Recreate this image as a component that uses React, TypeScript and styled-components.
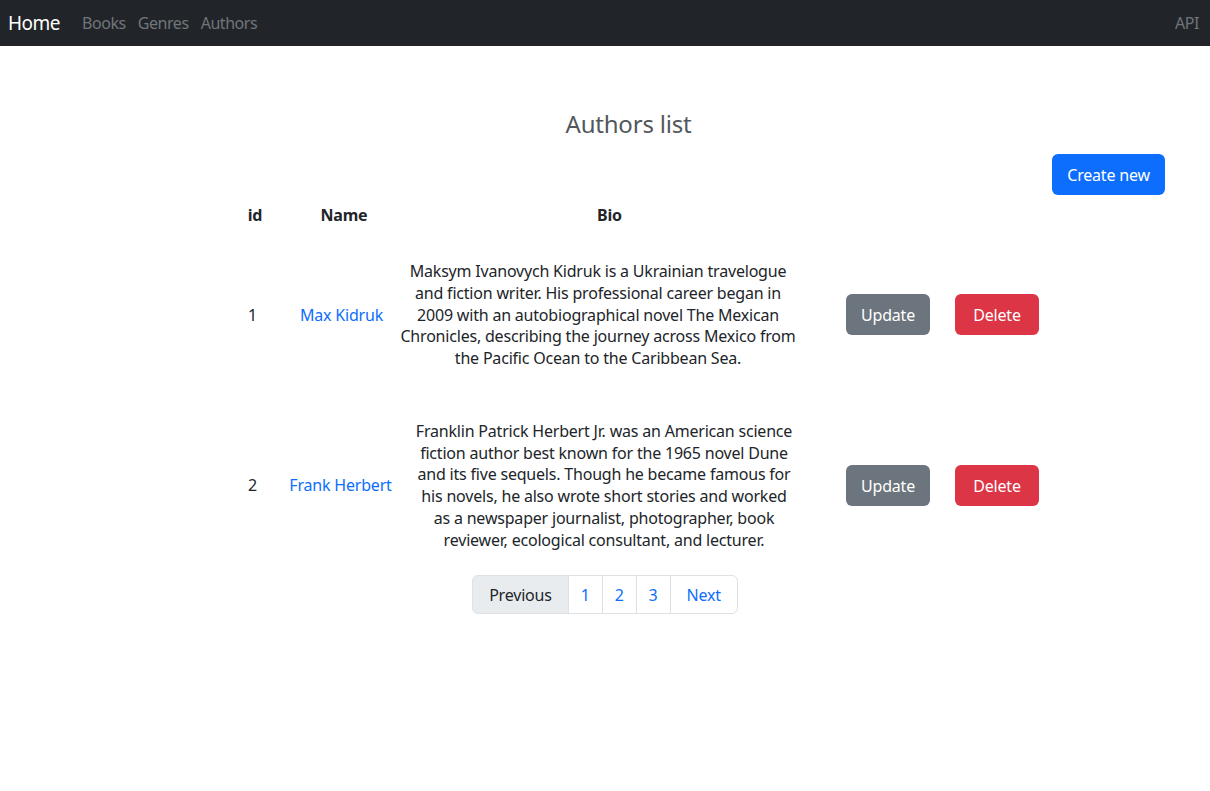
import React from "react";
import styled, { createGlobalStyle } from "styled-components";

const GlobalStyle = createGlobalStyle`
  * { box-sizing: border-box; }
  html, body { margin: 0; padding: 0; background: #fff; }
  body {
    font-family: "Noto Sans", "Open Sans", "Liberation Sans", sans-serif;
    font-size: 16px;
    letter-spacing: -0.2px;
    color: #212529;
  }
`;

const Navbar = styled.nav`
  height: 46px;
  background: #212529;
  display: flex;
  align-items: center;
  padding: 0 11px 0 8px;
`;

const Brand = styled.a`
  font-size: 19px;
  letter-spacing: -0.5px;
  color: #fff;
  text-decoration: none;
  margin-right: 22px;
`;

const NavLinks = styled.div`
  display: flex;
  gap: 12px;
  flex: 1;
`;

const NavLink = styled.a`
  font-size: 16px;
  letter-spacing: -0.45px;
  color: #70757a;
  text-decoration: none;
`;

const Main = styled.main`
  padding: 63px 45px 0 0;
  display: flex;
  flex-direction: column;
`;

const Title = styled.h4`
  margin: 0 0 0 92px;
  font-size: 24px;
  font-weight: 400;
  line-height: 29px;
  color: #52575c;
  text-align: center;
`;

const Toolbar = styled.div`
  display: flex;
  justify-content: flex-end;
  margin-top: 16px;
`;

const Button = styled.button<{ $variant: "primary" | "secondary" | "danger"; $width: number }>`
  width: ${(p) => p.$width}px;
  height: 41px;
  padding: 0;
  border: none;
  border-radius: 6px;
  font-family: inherit;
  font-size: 16px;
  letter-spacing: inherit;
  color: #fff;
  cursor: pointer;
  background: ${(p) =>
    p.$variant === "primary" ? "#0d6efd" : p.$variant === "secondary" ? "#6c757d" : "#dc3545"};
`;

const Table = styled.div`
  display: flex;
  flex-direction: column;
  margin-left: 220px;
`;

const Row = styled.div<{ $cols: string }>`
  display: grid;
  grid-template-columns: ${(p) => p.$cols};
`;

const HeadCell = styled.div`
  height: 40px;
  display: flex;
  align-items: center;
  justify-content: center;
  font-weight: 700;
`;

const Cell = styled.div<{ $indent?: number }>`
  padding: 26px 0 25px ${(p) => p.$indent ?? 0}px;
  display: flex;
  align-items: center;
  justify-content: center;
  text-align: center;
  line-height: 21.75px;
`;

const ActionCell = styled.div<{ $inset: number }>`
  display: flex;
  align-items: center;
  padding-left: ${(p) => p.$inset}px;
`;

const NameLink = styled.a`
  color: #0d6efd;
  text-decoration: none;
  white-space: nowrap;
`;

const Pagination = styled.ul`
  list-style: none;
  display: flex;
  margin: -1px 0 0 45px;
  padding: 0;
  align-self: center;
`;

const PageItem = styled.li<{ $active?: boolean; $wide?: boolean }>`
  height: 39px;
  display: flex;
  align-items: center;
  padding: 0 ${(p) => (p.$wide ? 16 : 12)}px;
  border: 1px solid #dee2e6;
  margin-left: -1px;
  background: ${(p) => (p.$active ? "#e9ecef" : "#fff")};
  color: ${(p) => (p.$active ? "#212529" : "#0d6efd")};
  &:first-child {
    margin-left: 0;
    border-radius: 6px 0 0 6px;
  }
  &:last-child {
    border-radius: 0 6px 6px 0;
  }
`;

const authors = [
  {
    id: 1,
    name: "Max Kidruk",
    bio: "Maksym Ivanovych Kidruk is a Ukrainian travelogue and fiction writer. His professional career began in 2009 with an autobiographical novel The Mexican Chronicles, describing the journey across Mexico from the Pacific Ocean to the Caribbean Sea.",
    cols: "65px 113px 400px 145px 108px",
    indent: 0,
    inset: 48,
  },
  {
    id: 2,
    name: "Frank Herbert",
    bio: "Franklin Patrick Herbert Jr. was an American science fiction author best known for the 1965 novel Dune and its five sequels. Though he became famous for his novels, he also wrote short stories and worked as a newspaper journalist, photographer, book reviewer, ecological consultant, and lecturer.",
    cols: "65px 111px 398px 149px 108px",
    indent: 18,
    inset: 52,
  },
];

export default function App() {
  return (
    <>
      <GlobalStyle />
      <Navbar>
        <Brand href="#">Home</Brand>
        <NavLinks>
          <NavLink href="#">Books</NavLink>
          <NavLink href="#">Genres</NavLink>
          <NavLink href="#">Authors</NavLink>
        </NavLinks>
        <NavLink href="#">API</NavLink>
      </Navbar>
      <Main>
        <Title>Authors list</Title>
        <Toolbar>
          <Button $variant="primary" $width={113}>Create new</Button>
        </Toolbar>
        <Table>
          <Row $cols="70px 108px 423px">
            <HeadCell>id</HeadCell>
            <HeadCell>Name</HeadCell>
            <HeadCell>Bio</HeadCell>
          </Row>
          {authors.map((a) => (
            <Row key={a.id} $cols={a.cols}>
              <Cell>{a.id}</Cell>
              <Cell>
                <NameLink href="#">{a.name}</NameLink>
              </Cell>
              <Cell $indent={a.indent}>{a.bio}</Cell>
              <ActionCell $inset={a.inset}>
                <Button $variant="secondary" $width={84}>Update</Button>
              </ActionCell>
              <ActionCell $inset={12}>
                <Button $variant="danger" $width={84}>Delete</Button>
              </ActionCell>
            </Row>
          ))}
        </Table>
        <Pagination>
          <PageItem $active $wide>Previous</PageItem>
          <PageItem>1</PageItem>
          <PageItem>2</PageItem>
          <PageItem>3</PageItem>
          <PageItem $wide>Next</PageItem>
        </Pagination>
      </Main>
    </>
  );
}
